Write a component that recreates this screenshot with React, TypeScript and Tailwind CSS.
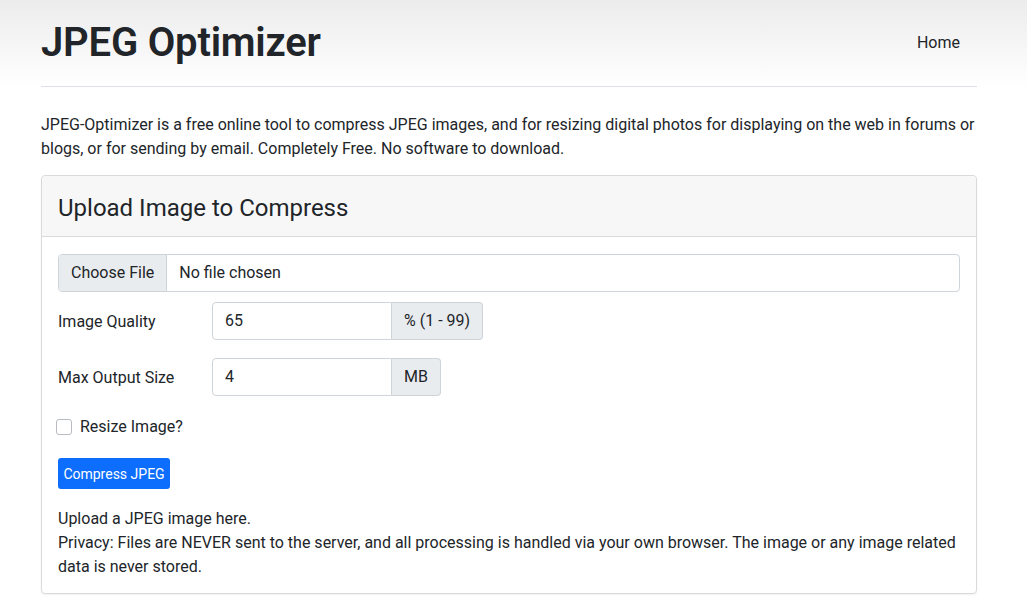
import React, { useState } from 'react';

export default function App() {
  const [resize, setResize] = useState(false);

  return (
    <div className="min-h-screen bg-white text-[#212529] font-['Roboto','Liberation_Sans',sans-serif] text-base leading-6">
      {/* header */}
      <div className="bg-gradient-to-b from-[#ececec] to-white">
        <div className="ml-[41px] w-[936px] h-[87px] flex items-center justify-between border-b border-[#dee2e6]">
          <h1 className="text-[40px] font-semibold leading-[48px] tracking-[-0.2px]">JPEG Optimizer</h1>
          <a href="#" className="mr-[17px] text-[#212529]">Home</a>
        </div>
      </div>

      <div className="ml-[41px] w-[936px]">
        <p className="mt-[26px] mb-[14px]">
          JPEG-Optimizer is a free online tool to compress JPEG images, and for resizing digital photos for displaying on the web in forums or blogs, or for sending by email. Completely Free. No software to download.
        </p>

        {/* card */}
        <div className="border border-[#dadada] rounded-[4px] shadow-[0_1px_2px_rgba(0,0,0,0.06)]">
          <div className="h-[61px] bg-[#f7f7f7] border-b border-[#dadada] flex items-center px-[16px] pt-[4px] rounded-t-[4px]">
            <h3 className="text-[24px] leading-[29px]">Upload Image to Compress</h3>
          </div>

          <div className="px-[16px] pt-[17px] pb-[14px]">
            {/* file input */}
            <div className="h-[38px] flex border border-[#ced4da] rounded-[4px] overflow-hidden">
              <span className="bg-[#e9ecef] border-r border-[#ced4da] px-[12px] flex items-center">Choose File</span>
              <span className="px-[12px] flex items-center">No file chosen</span>
            </div>

            <div className="mt-[10px] flex items-center h-[38px]">
              <label className="w-[154px] pt-[2px]">Image Quality</label>
              <div className="flex h-[38px]">
                <input defaultValue="65" className="w-[180px] border border-[#ced4da] rounded-l-[4px] px-[12px] outline-none" />
                <span className="bg-[#e9ecef] border border-l-0 border-[#ced4da] rounded-r-[4px] px-[12px] flex items-center">% (1 - 99)</span>
              </div>
            </div>

            <div className="mt-[18px] flex items-center h-[38px]">
              <label className="w-[154px] pt-[2px]">Max Output Size</label>
              <div className="flex h-[38px]">
                <input defaultValue="4" className="w-[180px] border border-[#ced4da] rounded-l-[4px] px-[12px] outline-none" />
                <span className="bg-[#e9ecef] border border-l-0 border-[#ced4da] rounded-r-[4px] px-[12px] flex items-center">MB</span>
              </div>
            </div>

            <label className="mt-[20px] -ml-[2px] flex items-center gap-[8px] h-[22px]">
              <input
                type="checkbox"
                checked={resize}
                onChange={() => setResize(!resize)}
                className="appearance-none w-[16px] h-[16px] border border-[#b8bcc0] rounded-[3px] bg-white"
              />
              <span>Resize Image?</span>
            </label>

            <button className="mt-[20px] h-[31px] w-[112px] bg-[#0d6efd] text-white text-[14px] rounded-[3px]">
              Compress JPEG
            </button>

            <div className="mt-[18px]">
              <p>Upload a JPEG image here.</p>
              <p>
                Privacy: Files are NEVER sent to the server, and all processing is handled via your own browser. The image or any image related data is never stored.
              </p>
            </div>
          </div>
        </div>
      </div>
    </div>
  );
}
